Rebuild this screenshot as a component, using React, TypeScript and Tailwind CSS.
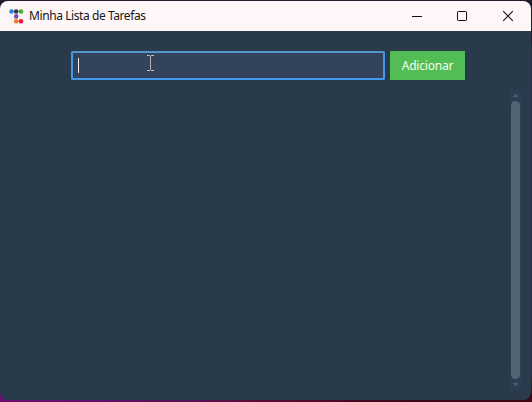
import React from "react";

const dots = [
  { x: 2.5, y: 2.5, color: "#2684dc" },
  { x: 7.2, y: 2.5, color: "#333646" },
  { x: 12, y: 2.5, color: "#43b02a" },
  { x: 7.2, y: 7.4, color: "#7d4bb5" },
  { x: 7.2, y: 12.2, color: "#f5792a" },
  { x: 12, y: 12.2, color: "#ef1238" },
];

function AppIcon() {
  return (
    <svg className="block h-[15px] w-[15px] shrink-0" viewBox="0 0 15 15">
      <rect width="15" height="15" rx="1.5" fill="#f8f5f6" />
      {dots.map((d) => (
        <circle key={d.color} cx={d.x} cy={d.y} r="2.3" fill={d.color} />
      ))}
    </svg>
  );
}

function TitleBar() {
  return (
    <header className="flex h-[30px] shrink-0 items-center bg-[#fff6f8] pl-[9px]">
      <AppIcon />
      <h1 className="ml-[5px] grow whitespace-nowrap text-[12px] leading-4 tracking-[-0.42px] text-[#151515]">
        Minha Lista de Tarefas
      </h1>
      <div className="flex h-full text-[#111]">
        <button className="flex w-[45px] items-center justify-center" aria-label="Minimizar">
          <svg className="h-[10px] w-[10px]" viewBox="0 0 10 10">
            <path d="M0 5.5H10" stroke="currentColor" />
          </svg>
        </button>
        <button className="flex w-[46px] items-center justify-center" aria-label="Maximizar">
          <svg className="h-[10px] w-[10px]" viewBox="0 0 10 10">
            <rect x=".5" y=".5" width="9" height="9" rx=".7" fill="none" stroke="currentColor" />
          </svg>
        </button>
        <button className="flex w-[46px] items-center justify-center" aria-label="Fechar">
          <svg className="h-[10px] w-[10px]" viewBox="0 0 10 10">
            <path d="M0 0L10 10M10 0L0 10" stroke="currentColor" strokeWidth="1.1" />
          </svg>
        </button>
      </div>
    </header>
  );
}

function TaskForm() {
  return (
    <div className="flex pl-[71px] pt-5">
      <div className="relative flex h-[29px] w-[314px] items-center rounded-[2px] border-2 border-[#4299ed] border-t-[#5796cb] bg-[#33435b] pl-[5px]">
        <span className="h-[15px] w-px bg-[#f4f4ee]" />
        <svg className="absolute left-[74px] top-[2px] h-4 w-[7px]" viewBox="0 0 7 16">
          <path d="M0 .5H3M4 .5H7M0 15.5H3M4 15.5H7" stroke="#c3c6c9" />
          <path d="M3.5 1V15" stroke="#b9b2a0" />
        </svg>
      </div>
      <button className="ml-[5px] h-[29px] w-[75px] bg-[#52bd54] text-[12px] leading-4 tracking-[-0.2px] text-[#f2fff0]">
        Adicionar
      </button>
    </div>
  );
}

function Scrollbar() {
  return (
    <div className="ml-auto mr-[10px] mt-[10px] flex h-[300px] w-[11px] flex-col items-center bg-[#2d3d54]">
      <svg className="h-[11px] w-[11px] shrink-0" viewBox="0 0 11 11">
        <path d="M2.5 7L5.5 4L8.5 7Z" fill="#50616e" />
      </svg>
      <div className="w-[9px] grow rounded-full bg-[#536471]" />
      <svg className="h-[11px] w-[11px] shrink-0" viewBox="0 0 11 11">
        <path d="M2.5 4L5.5 7L8.5 4Z" fill="#50616e" />
      </svg>
    </div>
  );
}

export default function App() {
  return (
    <div className="h-[402px] w-[532px] overflow-hidden bg-[linear-gradient(to_right,#6c0d70_0%,#54135a_35%,#5a0c33_48%,#3b0a1c_75%,#400615_100%)] font-['Noto_Sans','Open_Sans',sans-serif]">
      <div className="h-[400px] bg-[linear-gradient(to_bottom,#1e1b2b_0,#1e1b2b_40px,#263347_50px,#263347_375px,transparent_395px)] pt-px">
        <main className="flex h-[399px] w-[531px] flex-col overflow-hidden rounded-[8px] bg-[#293b4b]">
          <TitleBar />
          <TaskForm />
          <Scrollbar />
        </main>
      </div>
    </div>
  );
}
